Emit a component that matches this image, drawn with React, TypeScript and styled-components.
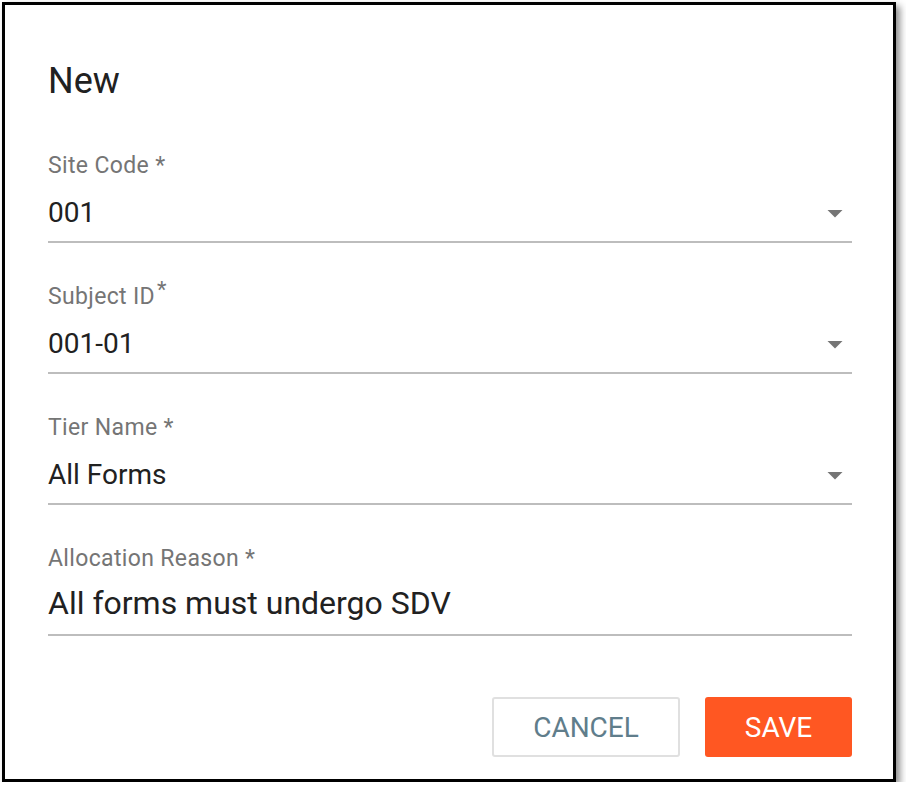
import React from "react";
import styled, { createGlobalStyle } from "styled-components";

const Global = createGlobalStyle`
  html, body { margin: 0; padding: 0; background: #ffffff; }
  body { font-family: Roboto, "Noto Sans", "Liberation Sans", sans-serif; }
  * { box-sizing: border-box; }
`;

const Dialog = styled.div`
  margin: 2px 0 0 2px;
  width: 894px;
  height: 780px;
  border: 3px solid #000;
  background: #fff;
  box-shadow: 4px 4px 7px rgba(0, 0, 0, 0.45);
  padding: 0 41px 0 43px;
  display: flex;
  flex-direction: column;
`;

const Title = styled.h2`
  margin: 0;
  padding-top: 54px;
  font-size: 36px;
  line-height: 44px;
  font-weight: 400;
  color: #212121;
`;

const Fields = styled.div`
  margin-top: 48px;
  display: flex;
  flex-direction: column;
  gap: 39px;
`;

const Field = styled.div`
  display: flex;
  flex-direction: column;
`;

const Label = styled.label`
  font-size: 23px;
  letter-spacing: 0.35px;
  line-height: 30px;
  color: #757575;
  margin-bottom: 14px;
`;

const Sup = styled.sup`
  font-size: 22px;
  line-height: 0;
  position: relative;
  top: 2px;
  margin-left: 2px;
`;

const ValueRow = styled.div`
  display: flex;
  align-items: flex-start;
  justify-content: space-between;
  padding-bottom: 10px;
  border-bottom: 2px solid #bdbdbd;
`;

const Value = styled.span<{ $large?: boolean }>`
  font-size: ${(p) => (p.$large ? "32px" : "28px")};
  line-height: 36px;
  margin: ${(p) => (p.$large ? "-3px 0 3px" : "0")};
  color: #212121;
`;

const Arrow = styled.svg`
  width: 36px;
  height: 36px;
  flex: none;
  margin-right: -1px;
  fill: #757575;
`;

const Actions = styled.div`
  margin-top: auto;
  margin-bottom: 22px;
  display: flex;
  justify-content: flex-end;
  gap: 25px;
`;

const Button = styled.button<{ $primary?: boolean }>`
  height: 60px;
  border-radius: 3px;
  font-family: Roboto, "Noto Sans", "Liberation Sans", sans-serif;
  font-size: 28px;
  font-weight: 400;
  text-transform: uppercase;
  cursor: pointer;
  border: ${(p) => (p.$primary ? "none" : "2px solid #e0e0e0")};
  background: ${(p) => (p.$primary ? "#ff5722" : "#ffffff")};
  color: ${(p) => (p.$primary ? "#ffffff" : "#607d8b")};
  width: ${(p) => (p.$primary ? "147px" : "188px")};
  padding: 0;
`;

const fields = [
  { label: "Site Code *", value: "001", select: true },
  { label: "Subject ID", sup: true, value: "001-01", select: true },
  { label: "Tier Name *", value: "All Forms", select: true },
  { label: "Allocation Reason *", value: "All forms must undergo SDV", select: false },
];

export default function App() {
  return (
    <>
      <Global />
      <Dialog>
        <Title>New</Title>
        <Fields>
          {fields.map((f) => (
            <Field key={f.label}>
              <Label>
                {f.label}
                {f.sup && <Sup>*</Sup>}
              </Label>
              <ValueRow>
                <Value $large={!f.select}>{f.value}</Value>
                {f.select && (
                  <Arrow viewBox="0 0 24 24">
                    <path d="M7 10l5 5 5-5z" />
                  </Arrow>
                )}
              </ValueRow>
            </Field>
          ))}
        </Fields>
        <Actions>
          <Button>Cancel</Button>
          <Button $primary>Save</Button>
        </Actions>
      </Dialog>
    </>
  );
}
